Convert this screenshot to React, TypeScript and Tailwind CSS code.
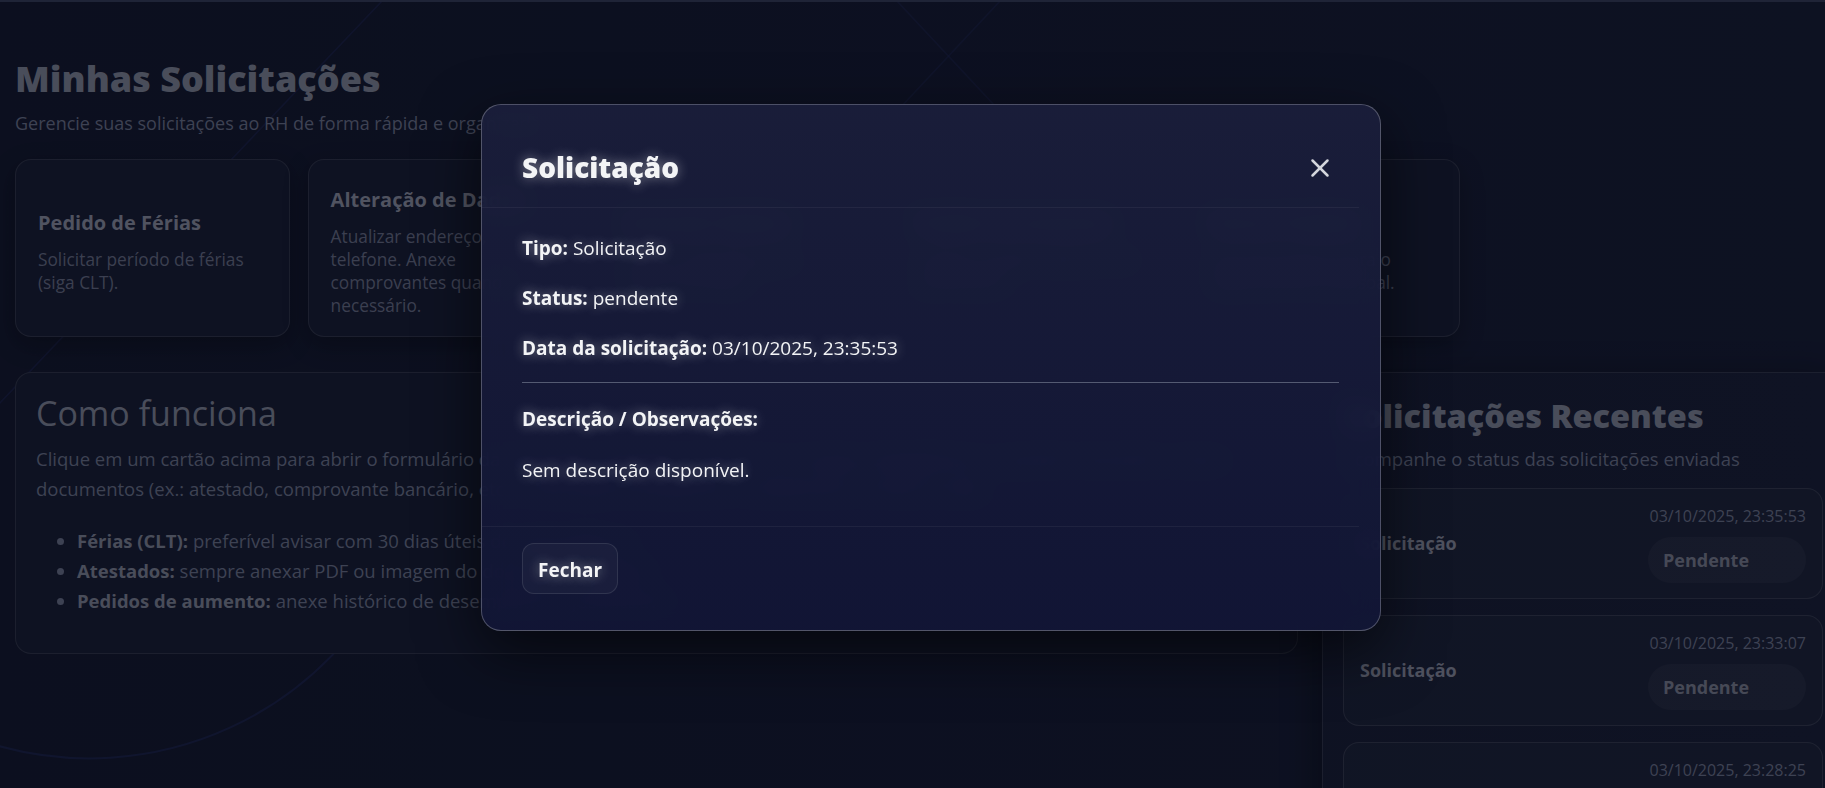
import React from 'react'
import { X } from 'lucide-react'

interface RequestCard {
  title: string
  desc: string
}

interface RecentRequest {
  type: string
  date: string
  status: string
}

const cards: RequestCard[] = [
  { title: 'Pedido de Férias', desc: 'Solicitar período de férias (siga CLT).' },
  { title: 'Alteração de Dados', desc: 'Atualizar endereço, telefone. Anexe comprovantes quando necessário.' },
  { title: 'Atestado Médico', desc: 'Envie o atestado para abono de faltas.' },
  { title: 'Pedido de Aumento', desc: 'Solicite revisão salarial com justificativa.' },
  { title: 'Outros Pedidos', desc: 'Assuntos gerais para o departamento pessoal.' },
]

const recent: RecentRequest[] = [
  { type: 'Solicitação', date: '03/10/2025, 23:35:53', status: 'Pendente' },
  { type: 'Solicitação', date: '03/10/2025, 23:33:07', status: 'Pendente' },
  { type: 'Solicitação', date: '03/10/2025, 23:28:25', status: 'Pendente' },
]

const glow = '[text-shadow:0_0_12px_rgba(255,255,255,0.45)]'

// Faint lines and arc drawn behind the page
const Backdrop: React.FC = () => (
  <svg className="pointer-events-none absolute inset-0" width="1825" height="788" fill="none">
    <path d="M383 0 L-4 407" stroke="#1f2858" strokeWidth="1.5" opacity="0.6" />
    <path d="M896 0 L1010 122" stroke="#1f2858" strokeWidth="1.5" opacity="0.5" />
    <path d="M1001 0 L885 124" stroke="#1f2858" strokeWidth="1.5" opacity="0.5" />
    <path d="M-5 745 A338 338 0 0 0 397 560" stroke="#1f2858" strokeWidth="2" opacity="0.7" />
  </svg>
)

const RequestDetailsModal: React.FC = () => (
  <div className="absolute inset-0 bg-black/40">
    <div className="absolute left-[481px] top-[104px] flex h-[527px] w-[900px] flex-col rounded-[20px] border border-white/25 bg-linear-to-b from-[#1b1f3c]/90 to-[#121637]/90 text-[#f3f4f6] shadow-[0_20px_60px_rgba(0,0,0,0.6)] backdrop-blur-md">
      <div className="mr-[21px] flex items-center justify-between border-b border-white/5 pb-[22px] pl-[40px] pr-[24px] pt-[46px]">
        <h2 className={`text-[28px] font-extrabold leading-[1.2] ${glow}`}>Solicitação</h2>
        <button className="text-[#d4d6dd]">
          <X size={30} strokeWidth={2} />
        </button>
      </div>

      <div className="flex flex-col pl-[40px] pr-[41px] pt-[27px] text-[19px] leading-[27px]">
        <p className={glow}>
          <strong className="font-bold">Tipo:</strong> Solicitação
        </p>
        <p className={`mt-[23px] ${glow}`}>
          <strong className="font-bold">Status:</strong> pendente
        </p>
        <p className={`mt-[23px] ${glow}`}>
          <strong className="font-bold">Data da solicitação:</strong> 03/10/2025, 23:35:53
        </p>
        <hr className="mt-[20px] border-t border-[#545a72]" />
        <p className={`mt-[23px] font-bold ${glow}`}>Descrição / Observações:</p>
        <p className={`mt-[24px] ${glow}`}>Sem descrição disponível.</p>
      </div>

      <div className="mt-auto mr-[21px] border-t border-white/5 pb-[36px] pl-[40px] pt-[16px]">
        <button
          className={`h-[51px] rounded-xl border border-white/10 bg-white/[0.03] px-[15px] pt-[3px] text-[19px] font-bold ${glow}`}
        >
          Fechar
        </button>
      </div>
    </div>
  </div>
)

export default function App() {
  return (
    <div className="relative h-[788px] w-full overflow-hidden bg-linear-to-r from-[#141a34] to-[#171e3a] font-['Open_Sans',sans-serif]">
      <Backdrop />
      <div className="relative h-[2px] w-full bg-[#353c5d]" />

      <main className="relative pl-[15px] pt-[55px]">
        <h1 className="text-[36px] font-extrabold leading-[1.2] text-[#7b8096]">Minhas Solicitações</h1>
        <p className="mt-[10px] text-[18px] leading-[27px] text-[#676e8a]">
          Gerencie suas solicitações ao RH de forma rápida e organizada.
        </p>

        <div className="mt-[22px] grid w-[1445px] grid-cols-5 gap-[18px]">
          {cards.map((card) => (
            <div
              key={card.title}
              className="flex h-[178px] flex-col justify-center rounded-2xl border border-white/10 bg-[#181e39] px-[22px] pt-[8px] shadow-[0_8px_24px_rgba(0,0,0,0.25)]"
            >
              <h3 className="text-[20px] font-bold leading-[26px] text-[#858aa0]">{card.title}</h3>
              <p className="mt-[12px] text-[17.3px] leading-[23px] text-[#636a85]">{card.desc}</p>
            </div>
          ))}
        </div>

        <div className="mt-[35px] flex gap-[24px]">
          <section className="h-[282px] w-[1283px] shrink-0 rounded-2xl border border-white/10 bg-[#181e39] px-[20px] pt-[20px]">
            <h2 className="text-[34px] font-medium leading-[1.2] text-[#7b8096]">Como funciona</h2>
            <p className="mt-[10px] text-[18.5px] leading-[30px] text-[#676e8a]">
              Clique em um cartão acima para abrir o formulário da solicitação desejada. Preencha os campos obrigatórios e, quando necessário, anexe
              <br />
              documentos (ex.: atestado, comprovante bancário, etc.). Você pode acompanhar o andamento na lista ao lado.
            </p>
            <ul className="mt-[22px] list-disc pl-[41px] text-[18.5px] leading-[30px] text-[#676e8a]">
              <li>
                <strong className="font-bold text-[#7b8096]">Férias (CLT):</strong> preferível avisar com 30 dias úteis de antecedência.
              </li>
              <li>
                <strong className="font-bold text-[#7b8096]">Atestados:</strong> sempre anexar PDF ou imagem do documento original.
              </li>
              <li>
                <strong className="font-bold text-[#7b8096]">Pedidos de aumento:</strong> anexe histórico de desempenho e justificativa.
              </li>
            </ul>
          </section>

          <aside className="h-[480px] w-[522px] shrink-0 rounded-2xl border border-white/10 bg-white/[0.01] px-5 pt-[23px] shadow-[-12px_0_30px_rgba(0,0,0,0.25)]">
            <h2 className="text-[32.5px] font-extrabold leading-[1.2] text-[#7b8096]">Solicitações Recentes</h2>
            <p className="mt-[10px] text-[18.5px] leading-[27px] text-[#676e8a]">
              Acompanhe o status das solicitações enviadas
            </p>
            <div className="mt-[16px] flex flex-col gap-4">
              {recent.map((item) => (
                <div
                  key={item.date}
                  className="flex h-[111px] items-center justify-between rounded-2xl border border-white/10 bg-white/[0.02] px-4"
                >
                  <span className="text-[18px] font-bold text-[#82879d]">{item.type}</span>
                  <div className="flex flex-col items-end gap-[9px]">
                    <span className="text-[16px] leading-6 text-[#676e8a]">{item.date}</span>
                    <span className="flex h-[46px] w-[158px] items-center rounded-full bg-white/[0.04] pl-[15px] text-[18px] font-bold text-[#767b90]">
                      {item.status}
                    </span>
                  </div>
                </div>
              ))}
            </div>
          </aside>
        </div>
      </main>

      <RequestDetailsModal />
    </div>
  )
}
